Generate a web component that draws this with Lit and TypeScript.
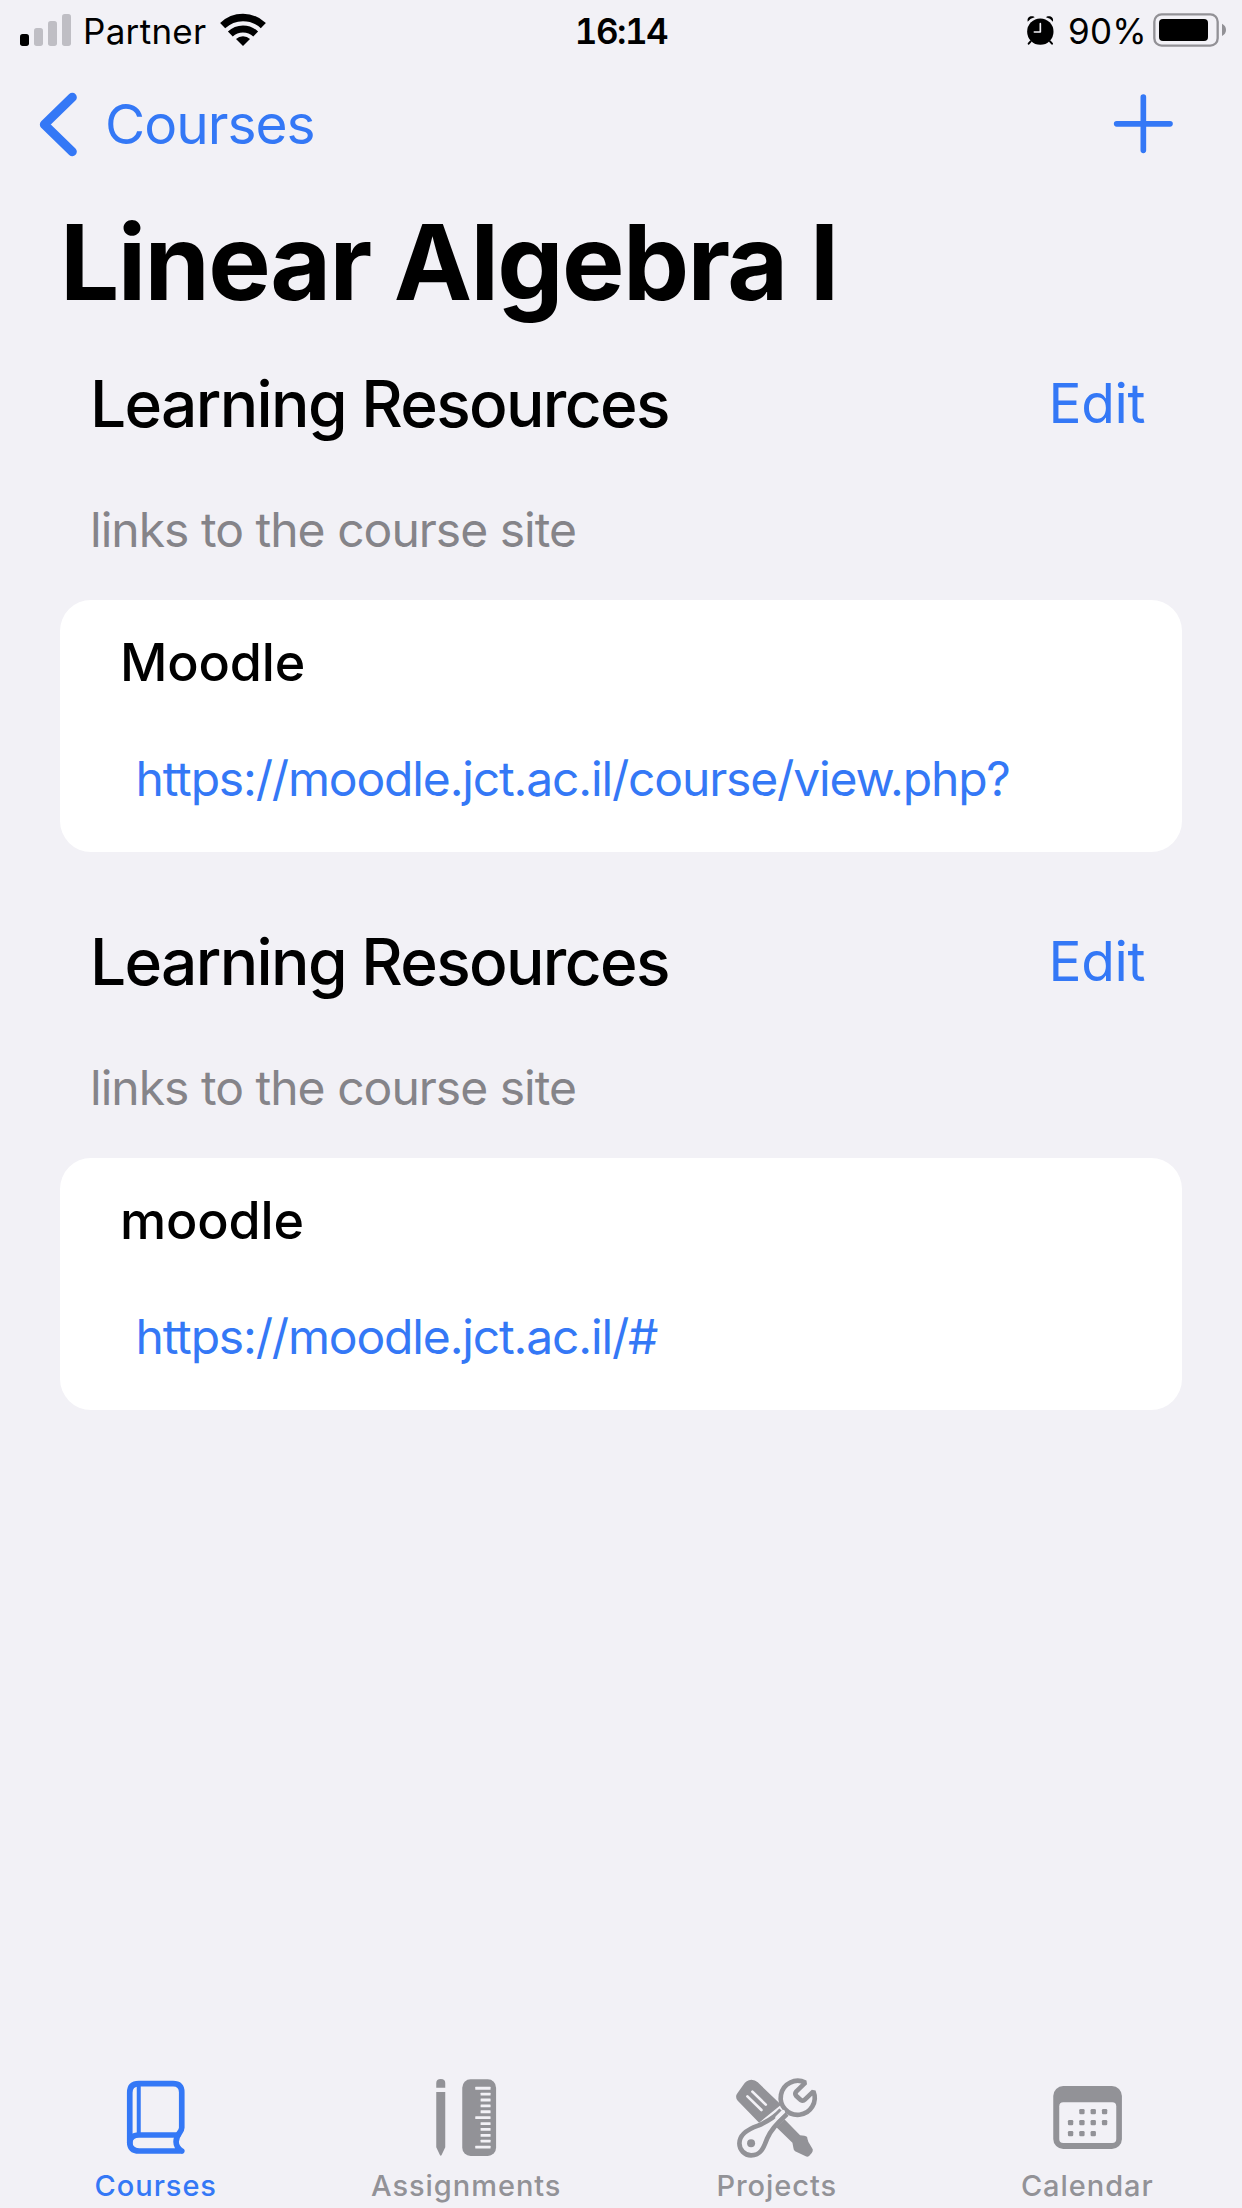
import { LitElement, html, css, svg, TemplateResult } from "lit";
import { customElement, property, state } from "lit/decorators.js";

interface Resource {
  name: string;
  url: string;
}

interface Tab {
  label: string;
  icon: TemplateResult;
}

const resources: Resource[] = [
  { name: "Moodle", url: "https://moodle.jct.ac.il/course/view.php?" },
  { name: "moodle", url: "https://moodle.jct.ac.il/#" },
];

// Icons are drawn on a grid of three units per pixel.

const bookIcon = html`<svg class="icon" viewBox="150.75 36 270 270" fill="none" stroke="currentColor" stroke-width="17" stroke-linecap="round">
  <path d="M366 273H238Q210 273 210 246V98Q210 71 237 71H340Q366 71 366 97V203C366 217 349 223 349 245C349 259 357 267 366 273"/>
  <path d="M210 248Q211 225 238 225H354"/>
  <path d="M237 74V222" stroke-width="12" stroke-linecap="butt"/>
</svg>`;

const rulerTicks = Array.from({ length: 11 }, (_, i) => {
  const x = i % 5 === 0 ? 345 : 361;
  return svg`<rect class="paper" x=${x} y=${80.5 + i * 17.65} width=${391 - x} height="8.500" rx="1.500"/>`;
});

const rulerIcon = html`<svg class="icon" viewBox="182.25 36 270 270" fill="currentColor">
  <path d="M228 83V69Q228 57 241.500 57Q255 57 255 69V83ZM228 96H255V262L244 285Q241.500 290 239 285L228 262Z"/>
  <rect x="306" y="58" width="101.500" height="230" rx="25"/>
  ${rulerTicks}
</svg>`;

const toolsIcon = html`<svg class="icon" viewBox="3.750 0 270 270" fill="currentColor">
  <path d="M24 86Q14 74 24 62L41 38Q49 24 65 23Q76 23 84 31L154 98L88 152Z"/>
  <path d="M140 166L164 142L211 190Q226 190 232 195Q233 202 236 210L249 232Q250 238 246 243L238 252Q233 256 228 253L196 238Q191 234 191 228L188 212Z"/>
  <path class="paper-line" d="M53 73L95 114M68 59L108 98" fill="none" stroke-width="8" stroke-linecap="round"/>
  <path class="paper" d="M154 114C140 130 115 148 85 161C48 174 29 190 29 214A35.500 35.500 0 0 0 64 250C94 250 102 226 112 200C122 175 145 150 172 126" stroke="currentColor" stroke-width="14"/>
  <path class="paper" d="M227 32L200 58Q194 65 199 71L213 84Q220 88 226 82L251 58A51 51 0 1 1 227 32Z" stroke="currentColor" stroke-width="14" stroke-linejoin="bevel"/>
  <path class="paper-line" d="M142 137L160 119" fill="none" stroke-width="11" stroke-linecap="round"/>
  <circle cx="64" cy="214" r="12"/>
</svg>`;

const calendarDots = [
  [245, 155], [279, 155], [313, 155],
  [211, 188], [245, 188], [279, 188], [313, 188],
  [211, 221], [245, 221], [279, 221],
].map(([x, y]) => svg`<rect x=${x - 8} y=${y - 8} width="16" height="16" rx="4"/>`);

const calendarIcon = html`<svg class="icon" viewBox="125.25 36 270 270" fill="currentColor">
  <rect x="159" y="78" width="206" height="189" rx="30"/>
  <rect class="paper" x="177" y="127" width="171" height="122" rx="12"/>
  ${calendarDots}
</svg>`;

const tabs: Tab[] = [
  { label: "Courses", icon: bookIcon },
  { label: "Assignments", icon: rulerIcon },
  { label: "Projects", icon: toolsIcon },
  { label: "Calendar", icon: calendarIcon },
];

@customElement("status-bar")
export class StatusBar extends LitElement {
  static styles = css`
    :host {
      display: grid;
      grid-template-columns: 1fr auto 1fr;
      height: 62px;
      line-height: 62px;
      font-size: 35px;
      color: #000;
    }
    svg { display: block; height: 62px; flex: none; }
    .left { display: flex; padding-left: 20px; }
    .right { display: flex; justify-content: flex-end; padding-right: 14px; }
    .signal { width: 53px; margin-right: 10px; }
    .dim { fill: #bfbec4; }
    .carrier { width: 137px; letter-spacing: 0.3px; }
    .wifi { width: 46px; }
    .time { font-weight: 600; font-variant-numeric: tabular-nums; letter-spacing: -1.5px; }
    .alarm { width: 30px; margin-right: 12px; }
    .hands { stroke: #f2f1f6; }
    .percent { width: 84px; letter-spacing: 0.2px; }
    .battery { width: 76px; }
  `;

  render() {
    return html`
      <div class="left">
        <svg class="signal" viewBox="60 0 159 186">
          <rect x="60" y="102" width="27" height="36" rx="8"/>
          <rect class="dim" x="102" y="84" width="27" height="54" rx="8"/>
          <rect class="dim" x="144" y="63" width="27" height="75" rx="8"/>
          <rect class="dim" x="186" y="42" width="27" height="96" rx="8"/>
        </svg>
        <span class="carrier">Partner</span>
        <svg class="wifi" viewBox="660 0 138 186" fill="none" stroke="#000">
          <path d="M668 77A88 88 0 0 1 790 77" stroke-width="22"/>
          <path d="M691 102A55 55 0 0 1 767 102" stroke-width="21"/>
          <path d="M729 138L708 117A30 30 0 0 1 750 117Z" fill="#000" stroke="none"/>
        </svg>
      </div>
      <div class="time">16:14</div>
      <div class="right">
        <svg class="alarm" viewBox="78 0 90 186">
          <path d="M92 124L86 131M150 124L156 131" stroke="#000" stroke-width="6" stroke-linecap="round"/>
          <circle cx="121" cy="95" r="39.500"/>
          <path d="M83 63C81 52 90 47 99 49Q103 50 104 52Q91 55 83 65ZM159 63C161 52 152 47 143 49Q139 50 138 52Q151 55 159 65Z"/>
          <path class="hands" d="M121 71V96H103" fill="none" stroke-width="5" stroke-linecap="round" stroke-linejoin="round"/>
        </svg>
        <span class="percent">90%</span>
        <svg class="battery" viewBox="456 0 228 186">
          <rect x="463" y="43" width="190" height="94" rx="22" fill="none" stroke="#929196" stroke-width="7"/>
          <rect x="477" y="57" width="147" height="66" rx="12"/>
          <path d="M666 71Q678 77 678 89.500Q678 102 666 108Z" fill="#929196"/>
        </svg>
      </div>
    `;
  }
}

@customElement("resource-section")
export class ResourceSection extends LitElement {
  @property({ attribute: false }) resource!: Resource;

  static styles = css`
    :host { display: block; padding: 0 60px 44px; }
    .head {
      display: flex;
      justify-content: space-between;
      padding: 0 37px 0 30px;
      height: 132px;
    }
    .heading {
      margin: 0;
      font-size: 64px;
      line-height: 132px;
      font-weight: 500;
      letter-spacing: -1.65px;
      white-space: nowrap;
    }
    .edit { font-size: 55px; line-height: 130px; color: #3478f6; letter-spacing: -0.4px; }
    .note {
      margin: 0 0 11px;
      padding-left: 30px;
      font-size: 48px;
      line-height: 119px;
      letter-spacing: -0.98px;
      color: #858489;
    }
    .card { background: #fff; border-radius: 31px; padding: 0 60px 21px; }
    .name {
      font-size: 52px;
      line-height: 126px;
      font-weight: 500;
      letter-spacing: -0.15px;
    }
    .url {
      padding: 1px 0 0 15.5px;
      font-size: 48px;
      line-height: 104px;
      letter-spacing: -1.16px;
      color: #3478f6;
      white-space: nowrap;
    }
  `;

  render() {
    return html`
      <div class="head">
        <h2 class="heading">Learning Resources</h2>
        <span class="edit">Edit</span>
      </div>
      <p class="note">links to the course site</p>
      <div class="card">
        <div class="name">${this.resource.name}</div>
        <div class="url">${this.resource.url}</div>
      </div>
    `;
  }
}

@customElement("app-root")
export class AppRoot extends LitElement {
  @state() private selected = 0;

  static styles = css`
    :host {
      display: flex;
      flex-direction: column;
      height: 2208px;
      background: #f2f1f6;
      color: #000;
      font-family: Inter, "Liberation Sans", sans-serif;
      overflow: hidden;
    }
    .nav {
      display: flex;
      height: 124px;
      padding: 0 66px 0 36px;
      color: #3478f6;
    }
    .nav svg { display: block; height: 124px; }
    .chevron { width: 69px; }
    .back { flex: 1; font-size: 55px; line-height: 124px; letter-spacing: -1px; }
    .plus { width: 66px; }
    .title {
      margin: 0;
      padding-left: 60px;
      font-size: 105px;
      line-height: 152px;
      font-weight: 700;
      letter-spacing: -1.65px;
    }
    .content { flex: 1; }
    .tabs { display: grid; grid-template-columns: repeat(4, 1fr); height: 136px; }
    .tab {
      display: flex;
      flex-direction: column;
      align-items: center;
      color: #929297;
      cursor: pointer;
    }
    .tab.active { color: #3478f6; }
    .label {
      padding-left: 1px;
      font-size: 29px;
      line-height: 48px;
      font-weight: 500;
      letter-spacing: 0.95px;
    }
    .icon { display: block; width: 90px; height: 90px; flex: none; }
    .paper { fill: #f2f1f6; }
    .paper-line { stroke: #f2f1f6; }
  `;

  render() {
    return html`
      <status-bar></status-bar>
      <div class="nav">
        <svg class="chevron" viewBox="108 186 207 372" fill="none" stroke="currentColor">
          <path d="M217 292L133 373.500L217 455" stroke-width="27" stroke-linecap="round" stroke-linejoin="round"/>
        </svg>
        <span class="back">Courses</span>
        <svg class="plus" viewBox="330 186 198 372" fill="none" stroke="currentColor">
          <path d="M430 291V451M350 371.500H510" stroke-width="17" stroke-linecap="round"/>
        </svg>
      </div>
      <h1 class="title">Linear Algebra I</h1>
      <div class="content">
        ${resources.map((r) => html`<resource-section .resource=${r}></resource-section>`)}
      </div>
      <div class="tabs">
        ${tabs.map(
          (t, i) => html`<div
            class=${i === this.selected ? "tab active" : "tab"}
            @click=${() => (this.selected = i)}
          >
            ${t.icon}
            <span class="label">${t.label}</span>
          </div>`
        )}
      </div>
    `;
  }
}
